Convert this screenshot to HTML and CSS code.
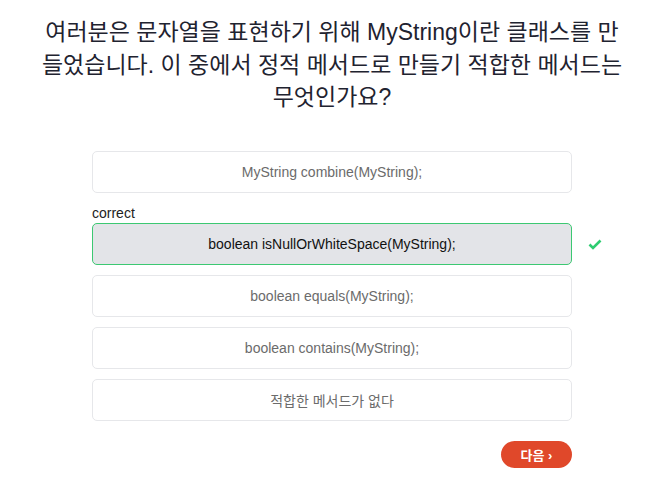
FILE: index.html
```html
<!DOCTYPE html>
<html lang="ko">
<head>
<meta charset="utf-8">
<link rel="stylesheet" href="styles.css">
</head>
<body>
<main class="quiz">
  <h1 class="question">여러분은 문자열을 표현하기 위해 MyString이란 클래스를 만<br>들었습니다. 이 중에서 정적 메서드로 만들기 적합한 메서드는<br>무엇인가요?</h1>
  <div class="options">
    <div class="option">MyString combine(MyString);</div>
    <div class="group">
      <div class="label">correct</div>
      <div class="row">
        <div class="option selected">boolean isNullOrWhiteSpace(MyString);</div>
        <svg class="check" width="14" height="12" viewBox="0 0 14 12"><path d="M1.5 6.5 L5 10 L12.5 2.5" fill="none" stroke="#2ecc71" stroke-width="2.6"/></svg>
      </div>
    </div>
    <div class="option">boolean equals(MyString);</div>
    <div class="option">boolean contains(MyString);</div>
    <div class="option">적합한 메서드가 없다</div>
  </div>
  <div class="actions">
    <button class="next">다음 ›</button>
  </div>
</main>
</body>
</html>
```
FILE: styles.css
```css
body {
  margin: 0;
  background: #fff;
  font-family: "Liberation Sans", "Noto Sans CJK KR", sans-serif;
}
.quiz {
  width: 480px;
  margin: 0 0 0 92px;
  padding-top: 16px;
}
.question {
  margin: 0 -80px;
  font-size: 23px;
  font-weight: normal;
  line-height: 32.5px;
  text-align: center;
  color: #1f2330;
  white-space: nowrap;
}
.options {
  margin-top: 37px;
  display: flex;
  flex-direction: column;
  gap: 10px;
}
.group {
  margin-top: 2px;
}
.label {
  font-size: 14px;
  color: #222;
  line-height: 16px;
  margin-bottom: 2px;
}
.row {
  position: relative;
}
.option {
  box-sizing: border-box;
  height: 42px;
  border: 1px solid #e6e7ea;
  border-radius: 5px;
  display: flex;
  align-items: center;
  justify-content: center;
  font-size: 14px;
  color: #6b6b6b;
}
.option.selected {
  background: #e3e4e8;
  border-color: #3cc872;
  color: #111;
}
.check {
  position: absolute;
  left: 496px;
  top: 15px;
}
.actions {
  display: flex;
  justify-content: flex-end;
  margin-top: 20px;
}
.next {
  width: 71px;
  height: 27px;
  border: none;
  border-radius: 14px;
  background: #e0482a;
  color: #fff;
  font-family: "Liberation Sans", "Noto Sans CJK KR", sans-serif;
  font-size: 13px;
  font-weight: bold;
  padding: 0;
}
```
